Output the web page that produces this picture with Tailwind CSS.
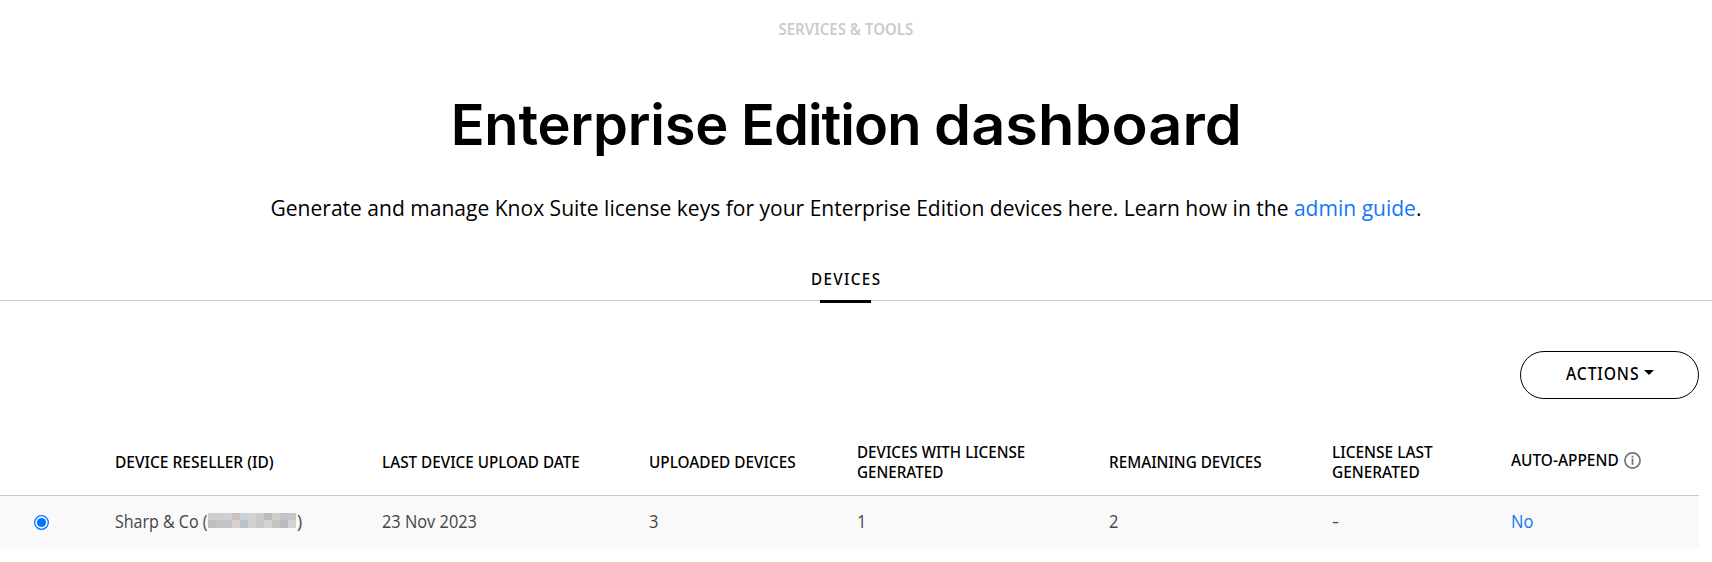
<!DOCTYPE html>
<html lang="en">
<head>
<meta charset="utf-8">
<title>Enterprise Edition dashboard</title>
<script src="https://cdn.jsdelivr.net/npm/@tailwindcss/browser@4"></script>
</head>
<body class="h-[562px] overflow-hidden bg-white font-['Noto_Sans',sans-serif] text-black">
  <header class="mr-5 flex flex-col items-center pt-[19px] text-center">
    <p class="scale-x-[.938] text-[16px] leading-5 font-semibold text-[#cbcbcb]">SERVICES &amp; TOOLS</p>
    <h1 class="mt-[51px] font-['Inter',sans-serif] text-[56px] leading-[70px] font-semibold whitespace-nowrap [word-spacing:-1px]"><span class="tracking-[-0.2px]">Enterprise </span><span class="tracking-[-1px]">Edition </span><span class="ml-[19px] inline-block origin-right scale-x-[1.062]">dashboard</span></h1>
    <p class="mt-[31px] scale-x-[.956] font-['Open_Sans',sans-serif] text-[22px] leading-8 whitespace-nowrap">Generate and manage Knox Suite license keys for your Enterprise Edition devices here. Learn how in the <a href="#" class="text-[#1178f8]">admin guide</a>.</p>
  </header>

  <nav class="mt-[46px] h-8 border-b border-[#cbcbcb]">
    <div class="mr-[21px] flex flex-col items-center">
      <a href="#" class="ml-px scale-x-[.92] text-[16.5px] leading-5 font-medium tracking-[1.5px]">DEVICES</a>
      <span class="mt-[11px] h-[3px] w-[51px] bg-black"></span>
    </div>
  </nav>

  <main class="w-[1699px]">
    <div class="flex justify-end pt-[50px]">
      <button class="flex h-12 w-[179px] items-center justify-center gap-[6px] rounded-full border border-black pb-[3px] text-[18px] font-medium tracking-[1px]">
        <span class="w-[72px] origin-left scale-x-[.87]">ACTIONS</span>
        <svg class="mb-[3px] h-[5px] w-[10px]" viewBox="0 0 10 5"><path d="M0 0h10L5 5z" fill="#000"/></svg>
      </button>
    </div>

    <section class="mt-[29px]">
      <div class="grid h-[68px] grid-cols-[115px_267px_267px_208px_252px_223px_179px_1fr] items-center border-b border-[#cbcbcb] text-[16.5px] leading-5 font-medium whitespace-nowrap">
        <span></span>
        <span class="origin-left scale-x-[.94]">DEVICE RESELLER (ID)</span>
        <span class="origin-left scale-x-[.925]">LAST DEVICE UPLOAD DATE</span>
        <span class="origin-left scale-x-[.93]">UPLOADED DEVICES</span>
        <span class="origin-left scale-x-[.92]">DEVICES WITH LICENSE<br>GENERATED</span>
        <span class="origin-left scale-x-[.925]">REMAINING DEVICES</span>
        <span class="origin-left scale-x-[.935]">LICENSE LAST<br>GENERATED</span>
        <span class="flex items-center gap-[5px] pb-[3px]">
          <span class="w-[108px] origin-left scale-x-[.935]">AUTO-APPEND</span>
          <svg class="size-[17px]" viewBox="0 0 17 17"><circle cx="8.5" cy="8.5" r="7.6" fill="none" stroke="#757575" stroke-width="1.7"/><path d="M7.6 3.8h1.8v1.6H7.6zM7.6 6.4h1.8v6.4H7.6z" fill="#757575"/></svg>
        </span>
      </div>
      <div class="grid h-[53px] grid-cols-[115px_267px_267px_208px_252px_223px_179px_1fr] items-center bg-[#f9f9f9] pb-[4px] font-['Open_Sans',sans-serif] text-[17.5px] leading-6 whitespace-nowrap text-[#454545]">
        <span class="pl-[34px]">
          <svg class="mt-[3px] size-[15px]" viewBox="0 0 15 15"><circle cx="7.5" cy="7.5" r="6.8" fill="#fff" stroke="#0075ff" stroke-width="1.3"/><circle cx="7.5" cy="7.5" r="4.6" fill="#0075ff"/></svg>
        </span>
        <span class="flex items-center">
          <span class="w-[93px] origin-left scale-x-[.915]">Sharp &amp; Co (</span>
          <svg class="h-[15px] w-[88px]" viewBox="0 0 88 15" shape-rendering="crispEdges">
            <path fill="#cfcccb" d="M0 0h8v7H0z"/><path fill="#cfcec9" d="M8 0h8v7H8z"/><path fill="#cfd0d1" d="M16 0h8v7h-8z"/><path fill="#c5c2c0" d="M24 0h8v7h-8z"/><path fill="#cbd0d5" d="M32 0h8v7h-8z"/><path fill="#d3d3d2" d="M40 0h8v7h-8z"/><path fill="#cbcbcb" d="M48 0h8v7h-8z"/><path fill="#bbbbbb" d="M56 0h8v7h-8z"/><path fill="#cfcec9" d="M64 0h8v7h-8z"/><path fill="#bec4cb" d="M72 0h8v7h-8z"/><path fill="#c9c6c6" d="M80 0h8v7h-8z"/>
            <path fill="#bebebe" d="M0 7h8v8H0z"/><path fill="#c4c4c3" d="M8 7h8v8H8z"/><path fill="#c2c3c2" d="M16 7h8v8h-8z"/><path fill="#dacfcd" d="M24 7h8v8h-8z"/><path fill="#b9c2ca" d="M32 7h8v8h-8z"/><path fill="#cfd1d3" d="M40 7h8v8h-8z"/><path fill="#cac8c2" d="M48 7h8v8h-8z"/><path fill="#d3d4d5" d="M56 7h8v8h-8z"/><path fill="#c1c3c5" d="M64 7h8v8h-8z"/><path fill="#b9babb" d="M72 7h8v8h-8z"/><path fill="#d3d3d3" d="M80 7h8v8h-8z"/>
          </svg>
          <span class="pl-px">)</span>
        </span>
        <span class="origin-left scale-x-[.935]">23 Nov 2023</span>
        <span class="origin-left scale-x-[.94]">3</span>
        <span class="origin-left scale-x-[.94]">1</span>
        <span class="origin-left scale-x-[.94]">2</span>
        <span class="origin-left scale-x-125">-</span>
        <a href="#" class="origin-left scale-x-[.94] text-[#1178f8]">No</a>
      </div>
    </section>
  </main>
</body>
</html>
